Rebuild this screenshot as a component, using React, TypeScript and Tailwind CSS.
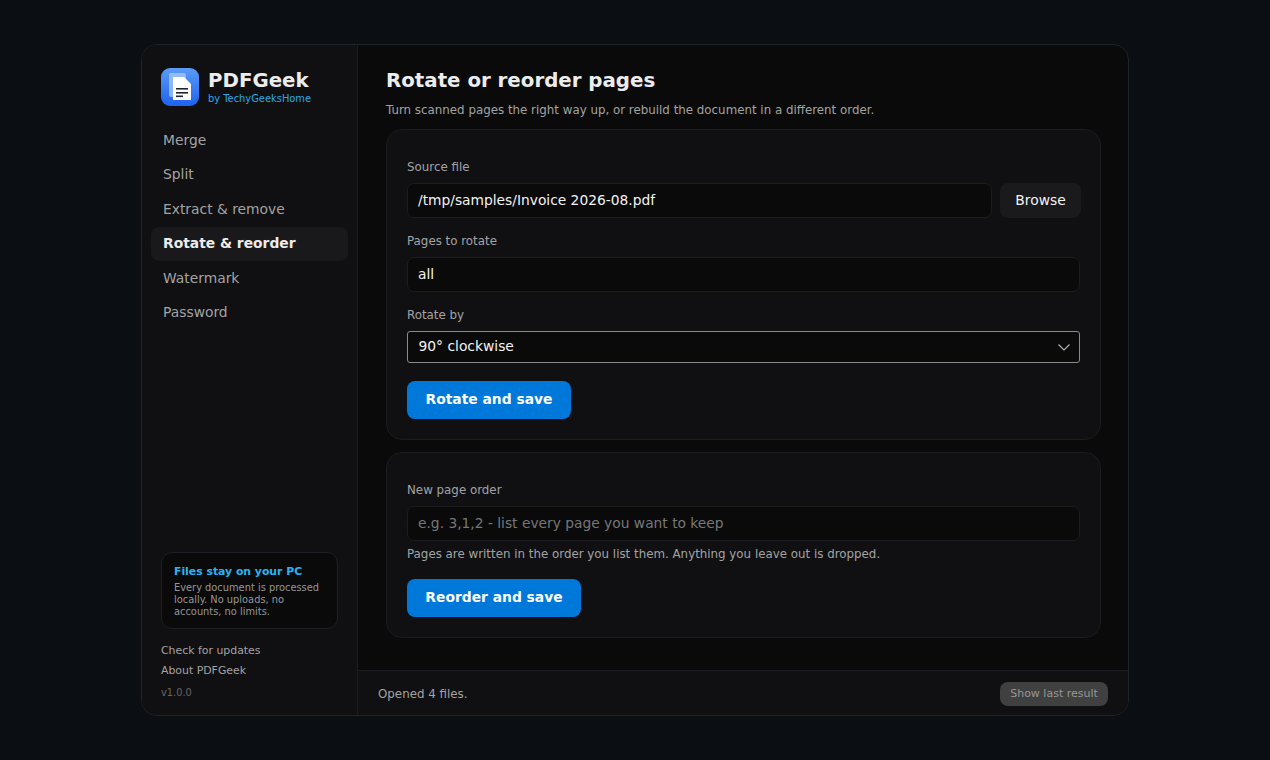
import React from "react";

const nav = ["Merge", "Split", "Extract & remove", "Rotate & reorder", "Watermark", "Password"];

function Logo() {
  return (
    <svg width="38" height="38" viewBox="0 0 38 38" className="shrink-0">
      <defs>
        <linearGradient id="lg" x1="0" y1="0" x2="0" y2="1">
          <stop offset="0" stopColor="#5b9bf8" />
          <stop offset="1" stopColor="#1f62ee" />
        </linearGradient>
      </defs>
      <rect width="38" height="38" rx="9" fill="url(#lg)" />
      <rect x="8" y="5" width="17" height="24" rx="2" fill="#a9c8fb" opacity="0.75" />
      <path d="M12 9h11l7 7v16H12z" fill="#ffffff" />
      <rect x="15" y="20" width="12" height="1.6" fill="#1c2333" />
      <rect x="15" y="24" width="12" height="1.6" fill="#1c2333" />
      <rect x="15" y="27.5" width="7" height="1.6" fill="#1c2333" />
    </svg>
  );
}

function Label({ children }: { children: React.ReactNode }) {
  return <div className="text-[11.85px] leading-[15px] text-[#a3a3a3]">{children}</div>;
}

function Field({ children, muted }: { children: React.ReactNode; muted?: boolean }) {
  return (
    <div className={`flex h-[35px] flex-1 items-center rounded-[7px] border border-[#1c1c1f] bg-[#0a0a0b] pl-[10px] text-[13.8px] ${muted ? "text-[#777777]" : "text-[#f2f2f2]"}`}>
      {children}
    </div>
  );
}

function Primary({ children, className }: { children: React.ReactNode; className: string }) {
  return (
    <button className={`flex h-[38px] items-center justify-center rounded-[8px] bg-[#0078d9] pb-[1px] text-[13.85px] font-bold text-white ${className}`}>
      {children}
    </button>
  );
}

export default function App() {
  return (
    <div
      className="flex h-[760px] w-full items-start justify-center bg-[#0b0e13] pt-[44px] text-[#f2f2f2]"
      style={{ fontFamily: '"DejaVu Sans", sans-serif' }}
    >
      <div className="flex h-[672px] w-[988px] overflow-hidden rounded-[16px] border border-[#1f232a] bg-[#0a0a0b]">
        <aside className="flex w-[216px] shrink-0 flex-col border-r border-[#1c1c20] bg-[#101013] pl-[9px] pr-[9px]">
          <div className="ml-[10px] mt-[23px] flex items-center gap-[9px]">
            <Logo />
            <div>
              <div className="text-[19.8px] font-bold leading-[23px] text-[#ececec]">PDFGeek</div>
              <div className="mt-[1px] text-[9.9px] leading-[12px] text-[#2aa8e6]">by TechyGeeksHome</div>
            </div>
          </div>
          <nav className="mt-[17.4px] flex flex-col gap-[0.4px]">
            {nav.map((n) => (
              <div
                key={n}
                className={`flex h-[34px] items-center rounded-[8px] px-[12px] text-[13.85px] ${n === "Rotate & reorder" ? "bg-[#19191c] font-bold text-[#ececec]" : "text-[#a3a3a3]"}`}
              >
                {n}
              </div>
            ))}
          </nav>
          <div className="mt-auto ml-[10px] mr-[10px] rounded-[11px] border border-[#1c1f24] bg-[#0a0a0b] px-[12px] pb-[10px] pt-[12px]">
            <div className="text-[10.85px] font-bold leading-[14px] text-[#2bb3f0]">Files stay on your PC</div>
            <div className="mt-[3px] text-[9.85px] leading-[12px] text-[#969696]">
              Every document is processed locally. No uploads, no accounts, no limits.
            </div>
          </div>
          <div className="ml-[10px] mt-[12px] text-[10.9px] leading-[20px] text-[#a3a3a3]">
            <div>Check for updates</div>
            <div>About PDFGeek</div>
          </div>
          <div className="mb-[16px] ml-[10px] mt-[5px] text-[9.8px] leading-[13px] text-[#666666]">v1.0.0</div>
        </aside>
        <main className="flex min-w-0 flex-1 flex-col">
          <div className="flex-1 px-[28px] pt-[22px]">
            <h1 className="text-[19.8px] font-bold leading-[27px] text-[#ececec]">Rotate or reorder pages</h1>
            <p className="mt-[9px] text-[11.85px] leading-[15px] text-[#a3a3a3]">
              Turn scanned pages the right way up, or rebuild the document in a different order.
            </p>
            <section className="mt-[11px] w-[715px] rounded-[16px] border border-[#1c1c20] bg-[#101013] px-[20px] pb-[20px] pt-[30px]">
              <Label>Source file</Label>
              <div className="-mr-[1px] mt-[8px] flex gap-[8px]">
                <Field>/tmp/samples/Invoice 2026-08.pdf</Field>
                <button className="flex h-[35px] w-[81px] items-center justify-center rounded-[8px] bg-[#1a1a1d] text-[13.85px] text-[#f2f2f2]">
                  Browse
                </button>
              </div>
              <div className="mt-[16px]"><Label>Pages to rotate</Label></div>
              <div className="mt-[8px] flex"><Field>all</Field></div>
              <div className="mt-[16px]"><Label>Rotate by</Label></div>
              <div className="mt-[8px] flex h-[32px] items-center justify-between rounded-[3px] border border-[#8a8a8a] bg-[#0a0a0b] pb-[1px] pl-[10.5px] pr-[8px] text-[13.85px] text-[#f2f2f2]">
                <span>90° clockwise</span>
                <svg width="14" height="14" viewBox="0 0 14 14" fill="none" stroke="#b5b5b5" strokeWidth="1.1" className="mt-[1px]">
                  <path d="M1.5 4.5 7 10l5.5-5.5" />
                </svg>
              </div>
              <Primary className="mt-[18px] w-[164px]">Rotate and save</Primary>
            </section>
            <section className="mt-[12px] w-[715px] rounded-[16px] border border-[#1c1c20] bg-[#101013] px-[20px] pb-[20px] pt-[30px]">
              <Label>New page order</Label>
              <div className="mt-[8px] flex"><Field muted>e.g. 3,1,2 - list every page you want to keep</Field></div>
              <div className="mt-[5px] pt-[1px]"><Label>Pages are written in the order you list them. Anything you leave out is dropped.</Label></div>
              <Primary className="mt-[17px] w-[174px]">Reorder and save</Primary>
            </section>
          </div>
          <footer className="flex h-[45px] shrink-0 items-center justify-between border-t border-[#1c1c20] bg-[#101013] pl-[20px] pr-[20px] pt-[2px]">
            <span className="pt-[1px] text-[11.85px] text-[#a3a3a3]">Opened 4 files.</span>
            <button className="flex h-[24px] w-[108px] items-center justify-center rounded-[8px] bg-[#404040] text-[11px] text-[#969696]">
              Show last result
            </button>
          </footer>
        </main>
      </div>
    </div>
  );
}
